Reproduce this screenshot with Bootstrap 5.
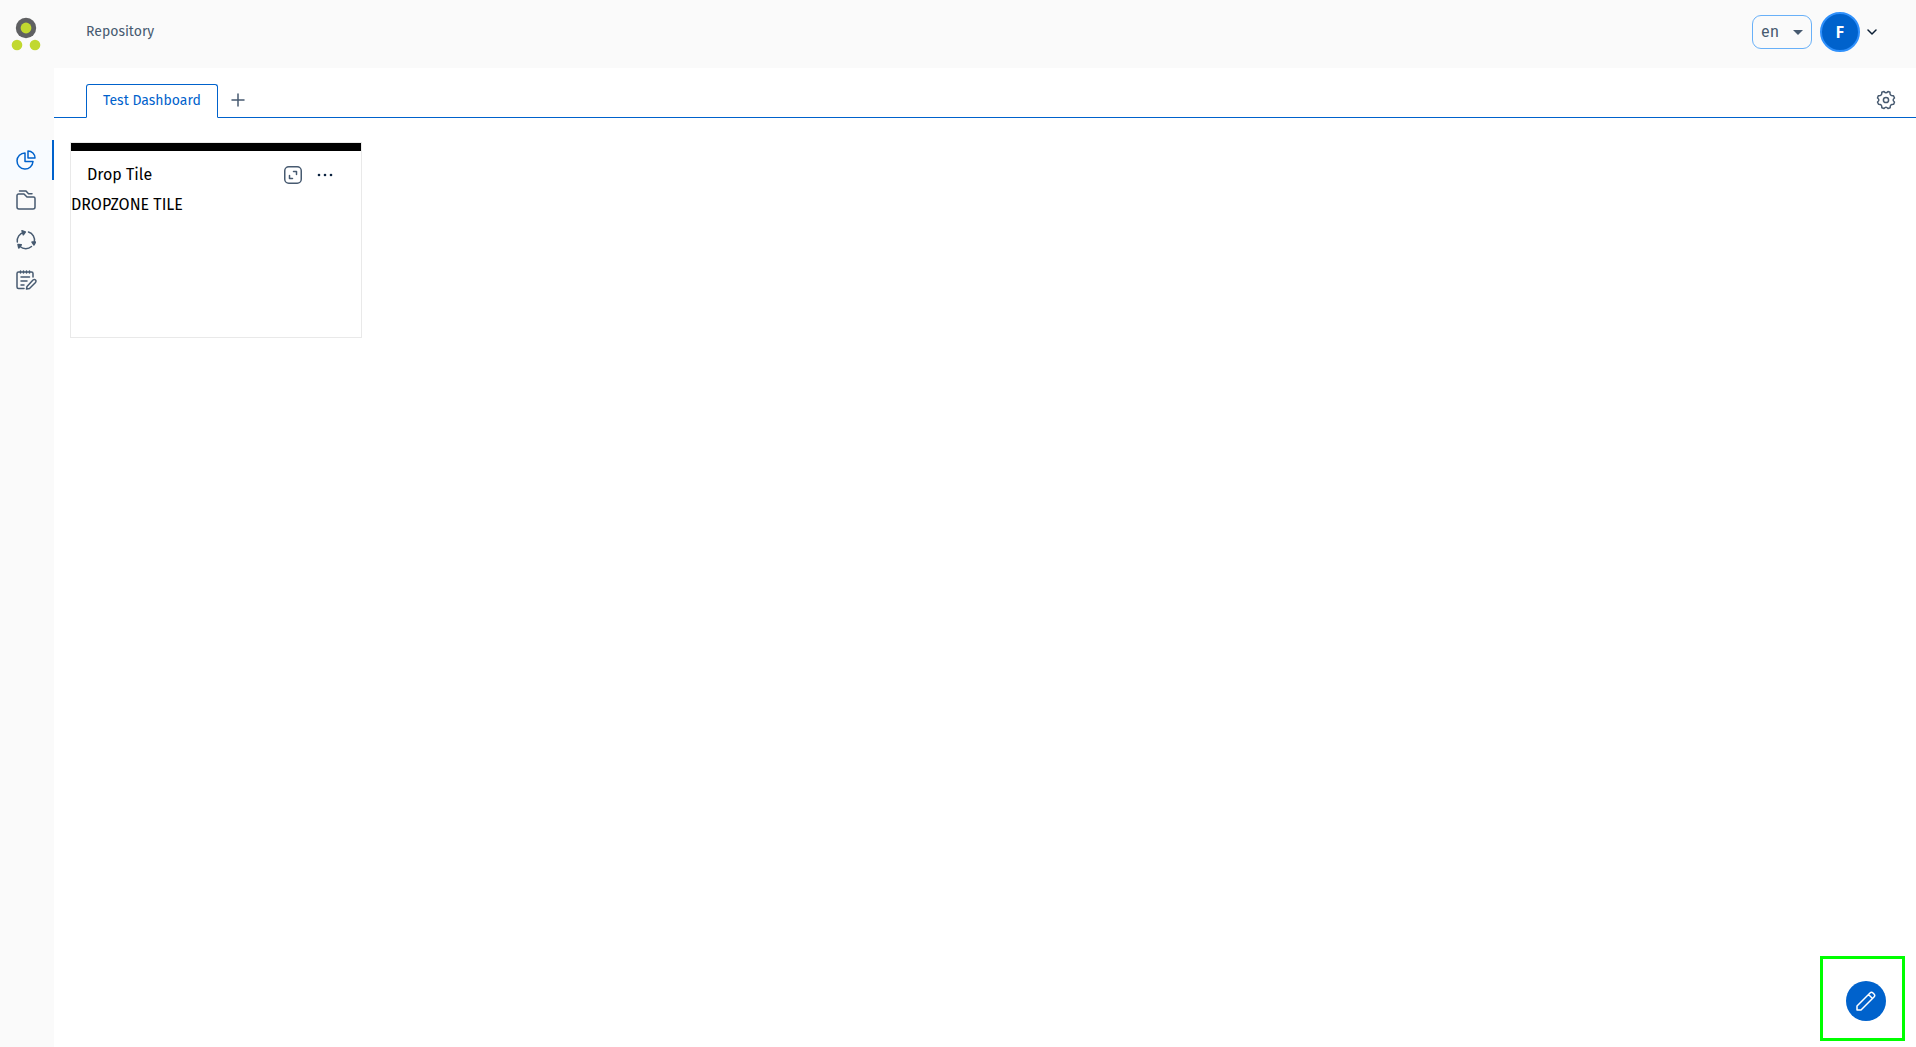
<!DOCTYPE html>
<html lang="en">
<head>
<meta charset="utf-8">
<meta name="viewport" content="width=device-width, initial-scale=1">
<title>Test Dashboard</title>
<link href="https://cdn.jsdelivr.net/npm/bootstrap@5.3.0/dist/css/bootstrap.min.css" rel="stylesheet">
<style>
  :root { --brand: #0062cc; --brand-light: #68b0f8; --ink: #475a70; --chrome: #fafafa; }
  body { font-family: "Fira Sans", "Noto Sans", sans-serif; font-size: 14px; color: #000; }
  svg { display: block; fill: none; stroke: currentColor; stroke-width: 1.5; stroke-linecap: round; stroke-linejoin: round; }
  .app-top { height: 68px; background: var(--chrome); padding-right: 39px; }
  .app-logo { width: 54px; padding-left: 11px; }
  .top-link { margin-left: 32px; margin-bottom: 6px; color: var(--ink); }
  .lang-select { appearance: none; width: 60px; height: 34px; padding: 0 8px; border: 1px solid var(--brand-light); border-radius: 9px; font-size: 16px; line-height: 32px; color: var(--ink);
    background: var(--chrome) url("data:image/svg+xml,%3Csvg xmlns='http://www.w3.org/2000/svg' viewBox='0 0 10 5'%3E%3Cpath fill='%23475a70' d='M0 0h10L5 5z'/%3E%3C/svg%3E") no-repeat right 8px center / 10px 5px; }
  .user-btn { gap: 7px; color: #0c1f35; }
  .user-avatar { width: 40px; height: 40px; background: var(--brand); border: 2px solid #2f90fb; color: #fff; font-family: "Open Sans", sans-serif; font-size: 16px; }
  .app-side { width: 54px; padding-top: 72px; background: var(--chrome); }
  .side-link { height: 40px; padding-left: 16px; color: var(--ink); }
  .side-link.active { color: var(--brand); background: #f8fbff; border-right: 2px solid var(--brand); }
  .tab-strip { height: 50px; padding: 0 20px 0 32px; border-bottom: 1px solid var(--brand); }
  .dash-tab { height: 34px; margin-bottom: -1px; padding: 0 16px 2px; color: var(--brand); background: #fff; border: 1px solid var(--brand); border-bottom-color: #fff; border-radius: 3px 3px 0 0; }
  .strip-btn { color: var(--ink); height: 34px; }
  .board { padding: 24px 16px; }
  .tile { width: 292px; height: 196px; border: 1px solid #e9e9e9; font-size: 16px; line-height: 24px; }
  .tile-bar { height: 8px; background: #000; }
  .tile-head { height: 42px; padding: 6px 28px 0 16px; }
  .tile-title { font-size: 16px; line-height: 24px; font-weight: 400; }
  .tile-tools { gap: 15px; }
  .tile-tool { color: var(--ink); }
  .edit-frame { right: 11px; bottom: 6px; width: 85px; height: 85px; border: 3px solid #0f0; padding: 5px 0 0 6px; }
  .edit-btn { width: 40px; height: 40px; background: var(--brand); color: #fff; }
</style>
</head>
<body class="d-flex flex-column vh-100 overflow-hidden bg-white">
<header class="app-top d-flex align-items-center flex-shrink-0">
  <a class="app-logo" href="#" aria-label="Home">
    <svg width="31" height="34" viewBox="0 0 31 34"><g stroke="none"><circle cx="15" cy="11" r="10.2" fill="#5f6062"/><circle cx="15" cy="11" r="5.4" fill="#c1d82f"/><circle cx="6" cy="28" r="5.3" fill="#c1d82f"/><circle cx="24" cy="28" r="5.3" fill="#c1d82f"/></g></svg>
  </a>
  <a class="top-link text-decoration-none" href="#">Repository</a>
  <div class="d-flex align-items-center gap-2 ms-auto mb-1">
    <select class="lang-select" aria-label="Language"><option>en</option></select>
    <button class="user-btn btn p-0 border-0 d-flex align-items-center" type="button" aria-label="User menu">
      <span class="user-avatar rounded-circle d-flex align-items-center justify-content-center fw-bold">F</span>
      <svg width="10" height="6" viewBox="0 0 10 6"><path d="M1 1l4 4 4-4"/></svg>
    </button>
  </div>
</header>
<div class="d-flex flex-grow-1">
  <nav class="app-side flex-shrink-0" aria-label="Main">
    <a class="side-link active d-flex align-items-center" href="#" aria-label="Dashboards">
      <svg width="20" height="20" viewBox="0 0 20 20"><path d="M9 3a8 8 0 1 0 8 8.500H9z"/><path d="M12 1v7h7a7 7 0 0 0-7-7z"/></svg>
    </a>
    <a class="side-link d-flex align-items-center" href="#" aria-label="Folders">
      <svg width="20" height="20" viewBox="0 0 20 20"><path d="M1 17V5.500A1.500 1.500 0 0 1 2.500 4H8l3 3h6.500A1.500 1.500 0 0 1 19 8.500V17a2 2 0 0 1-2 2H3a2 2 0 0 1-2-2z"/><path d="M3.500 1H10l2.500 2.800h3.500"/></svg>
    </a>
    <a class="side-link d-flex align-items-center" href="#" aria-label="Processes">
      <svg width="20" height="20" viewBox="0 0 20 20"><path d="M1.300 12A8.800 8.800 0 0 1 8 2.200M12.500 2A8.500 8.500 0 0 1 18.300 12M15.500 16.500A8.700 8.700 0 0 1 4 16.500"/><path d="M6 .8L9.300 2 7.300 4.800zM16 12h3.500L18 15zM2 14.500l3.300.3L2.800 18z" fill="currentColor"/></svg>
    </a>
    <a class="side-link d-flex align-items-center" href="#" aria-label="Forms">
      <svg width="21" height="20" viewBox="0 0 21 20"><path d="M17 7V3.500Q17 2 15.500 2H2.500Q1 2 1 3.500V17q0 1.500 1.500 1.500H8M4.500 1v2M7.500 1v2M10.500 1v2M13.500 1v2M5 7h8.500M5 11h6M5 15h3"/><path d="M11 16.500l6-6.500q1.500-1 2.500 0t0 2.500l-6 6-3 .6z"/></svg>
    </a>
  </nav>
  <main class="flex-grow-1">
    <div class="tab-strip d-flex align-items-end">
      <a class="dash-tab d-flex align-items-center text-decoration-none" href="#" aria-current="page">Test Dashboard</a>
      <button class="strip-btn btn border-0 py-0 d-flex align-items-center" type="button" aria-label="Add dashboard"><svg width="16" height="16" viewBox="0 0 16 16"><path d="M8 2v12M2 8h12"/></svg></button>
      <button class="strip-btn btn border-0 p-0 ms-auto d-flex align-items-center" type="button" aria-label="Settings">
        <svg width="20" height="20" viewBox="0 0 20 20"><path d="M8 1.500Q10 4 12 1.500L14 2.300Q13.500 6 17.500 5.800L18.500 8Q15.800 10 18.500 12L17.700 14.200Q13.800 14 14.200 17.700L12 18.500Q10 16 8 18.500L5.800 17.700Q6.200 14 2.500 14.200L1.500 12Q4.200 10 1.500 8L2.300 5.800Q6.200 6 5.800 2.300z"/><circle cx="10" cy="10" r="2.600"/></svg>
      </button>
    </div>
    <div class="board">
      <section class="tile">
        <div class="tile-bar"></div>
        <div class="tile-head d-flex align-items-center">
          <h2 class="tile-title mb-0 me-auto">Drop Tile</h2>
          <div class="tile-tools d-flex align-items-center">
            <button class="tile-tool btn p-0 border-0" type="button" aria-label="Expand tile"><svg width="18" height="18" viewBox="0 0 18 18"><rect x=".75" y=".75" width="16.500" height="16.500" rx="4"/><path d="M9.500 5.500h3v3M8.500 12.500h-3v-3"/></svg></button>
            <button class="tile-tool btn p-0 border-0" type="button" aria-label="Tile menu"><svg width="16" height="4" viewBox="0 0 16 4"><g fill="#0c2340" stroke="none"><circle cx="2" cy="2" r="1.300"/><circle cx="8" cy="2" r="1.300"/><circle cx="14" cy="2" r="1.300"/></g></svg></button>
          </div>
        </div>
        <div>DROPZONE TILE</div>
      </section>
    </div>
  </main>
</div>
<div class="edit-frame position-fixed d-flex align-items-center justify-content-center">
  <button class="edit-btn btn rounded-circle p-0 border-0 d-flex align-items-center justify-content-center" type="button" aria-label="Edit dashboard">
    <svg width="20" height="20" viewBox="0 0 20 20"><path d="M1 19v-4L14 2q1.500-1.500 3 0l1 1q1.500 1.500 0 3L5 19zM12.500 3.500l4 4"/></svg>
  </button>
</div>
<script src="https://cdn.jsdelivr.net/npm/bootstrap@5.3.0/dist/js/bootstrap.bundle.min.js"></script>
</body>
</html>
